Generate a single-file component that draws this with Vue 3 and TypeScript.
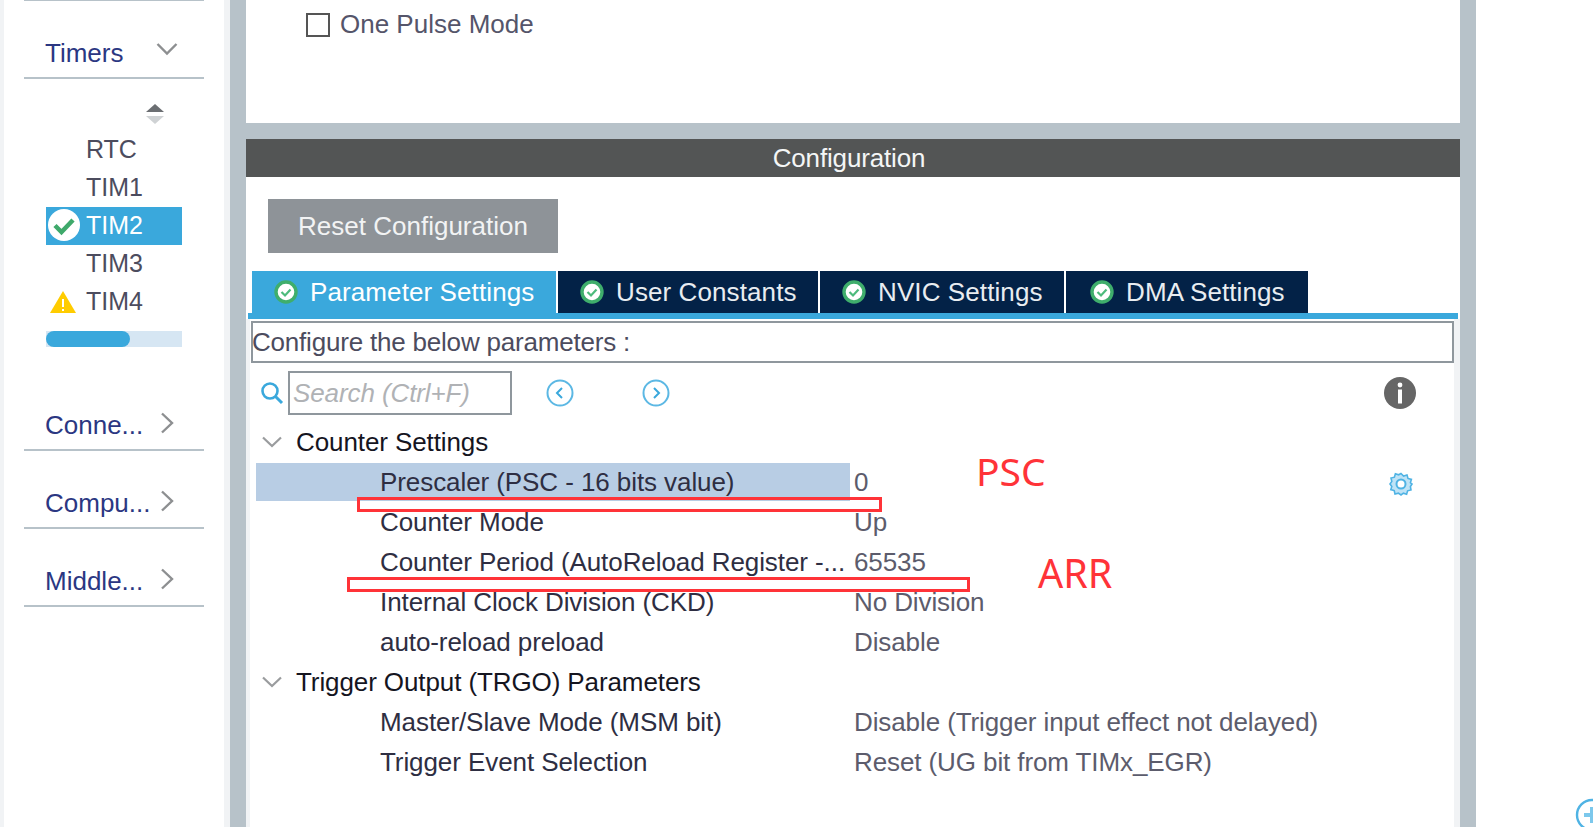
<template>
  <div class="page">
    <div class="edge"></div>

    <aside class="sidebar">
      <div class="top-rule"></div>
      <div class="category">
        <span class="category-name">Timers</span>
        <svg class="chev" width="22" height="14" viewBox="0 0 22 14"><path d="M1.5 2 L11 11.5 L20.5 2" /></svg>
      </div>
      <div class="sort">
        <svg width="20" height="22" viewBox="0 0 20 22">
          <path d="M10 1 L19 9 H1 Z" fill="#6b6e72" />
          <path d="M1 13 H19 L10 21 Z" fill="#cfd2d4" />
        </svg>
      </div>
      <ul class="peripherals">
        <li v-for="item in peripherals" :key="item.name" :class="{ active: item.state === 'ok' }">
          <svg v-if="item.state === 'ok'" class="state" width="34" height="34" viewBox="0 0 34 34">
            <circle cx="17" cy="17" r="16" fill="#fff" />
            <path d="M8 17.5 L14.5 24 L26 12" fill="none" stroke="#3fa96b" stroke-width="4.5" />
          </svg>
          <svg v-if="item.state === 'warn'" class="state" width="28" height="24" viewBox="0 0 28 24">
            <path d="M14 1 L27 23 H1 Z" fill="#fc0" />
            <path d="M14 9 V17 M14 19 V21" stroke="#fff" stroke-width="2" />
          </svg>
          <span>{{ item.name }}</span>
        </li>
      </ul>
      <div class="scrollbar"><div class="thumb"></div></div>
      <div class="categories">
        <div v-for="name in categories" :key="name" class="category">
          <span class="category-name">{{ name }}</span>
          <svg class="chev" width="14" height="22" viewBox="0 0 14 22"><path d="M2 1.5 L12 11 L2 20.5" /></svg>
        </div>
      </div>
    </aside>

    <div class="gutter"></div>
    <div class="bar"></div>

    <main class="main">
      <section class="mode-panel">
        <label class="pulse">
          <span class="checkbox"></span>
          <span>One Pulse Mode</span>
        </label>
      </section>
      <div class="band"></div>

      <section class="config">
        <header class="config-title">Configuration</header>
        <button type="button" class="reset">Reset Configuration</button>

        <nav class="tabs">
          <div v-for="(tab, i) in tabs" :key="tab.label" class="tab" :class="{ current: i === 0 }" :style="{ width: tab.width + 'px' }">
            <svg width="24" height="24" viewBox="0 0 24 24">
              <circle cx="12" cy="12" r="10" fill="#fff" stroke="#3fae6c" stroke-width="3.4" />
              <path d="M7.5 12 L11 15.5 L16.5 9.5" fill="none" stroke="#4dbb7c" stroke-width="2.2" />
            </svg>
            <span>{{ tab.label }}</span>
          </div>
        </nav>
        <div class="tab-line"></div>

        <div class="params">
          <div class="hint">Configure the below parameters :</div>

          <div class="search-row">
            <svg class="lens" width="24" height="24" viewBox="0 0 24 24">
              <circle cx="10" cy="10" r="7.5" fill="none" stroke="#3aa8dc" stroke-width="2.6" />
              <path d="M15.5 15.5 L22 22" stroke="#3aa8dc" stroke-width="3" />
            </svg>
            <div class="search">Search (Ctrl+F)</div>
            <svg class="nav nav-prev" width="28" height="28" viewBox="0 0 28 28">
              <circle cx="14" cy="14" r="12.5" fill="none" stroke="#5cb8e4" stroke-width="2" />
              <path d="M16 9 L11 14 L16 19" fill="none" stroke="#3aa8dc" stroke-width="2" />
            </svg>
            <svg class="nav nav-next" width="28" height="28" viewBox="0 0 28 28">
              <circle cx="14" cy="14" r="12.5" fill="none" stroke="#5cb8e4" stroke-width="2" />
              <path d="M12 9 L17 14 L12 19" fill="none" stroke="#3aa8dc" stroke-width="2" />
            </svg>
            <svg class="info" width="32" height="32" viewBox="0 0 32 32">
              <circle cx="16" cy="16" r="16" fill="#666" />
              <circle cx="16" cy="8" r="2.4" fill="#fff" />
              <rect x="14" y="12.5" width="4" height="14" fill="#fff" />
            </svg>
          </div>

          <div class="tree">
            <template v-for="group in groups" :key="group.title">
              <div class="group">
                <svg width="20" height="12" viewBox="0 0 20 12"><path d="M1 1.5 L10 10 L19 1.5" /></svg>
                <span>{{ group.title }}</span>
              </div>
              <div v-for="row in group.rows" :key="row.label" class="row">
                <div class="label" :class="{ selected: row.selected }">{{ row.label }}</div>
                <div class="value">{{ row.value }}</div>
                <svg v-if="row.selected" class="gear" width="24" height="24" viewBox="0 0 24 24">
                  <path
                    d="M12 1.5 L14.6 4 L18 3 L19 6.4 L22.4 7.4 L21.4 10.8 L23 12 L21.4 14.6 L22 18 L18.6 18.8 L17.6 22.2 L14.4 21.2 L12 23 L9.4 21.2 L6 22 L5.2 18.6 L1.8 17.6 L2.8 14.4 L1 12 L2.8 9.4 L2 6 L5.4 5.2 L6.4 1.8 L9.6 2.8 Z"
                    fill="#bfe3f6" stroke="#4fb3e4" stroke-width="1.6"
                  />
                  <circle cx="12" cy="12" r="4.5" fill="#fff" stroke="#4fb3e4" stroke-width="2" />
                </svg>
              </div>
            </template>
          </div>
        </div>
      </section>
    </main>

    <div class="bar"></div>
    <div class="rest"></div>

    <!-- annotations drawn on top of the screenshot -->
    <div class="mark mark-psc"></div>
    <div class="mark mark-arr"></div>
    <span class="note note-psc">PSC</span>
    <span class="note note-arr">ARR</span>

    <svg class="zoom-plus" width="34" height="34" viewBox="0 0 34 34">
      <circle cx="17" cy="17" r="15" fill="#fff" stroke="#4fb3e4" stroke-width="2.4" />
      <path d="M9 17 H25 M17 9 V25" stroke="#7cc8ec" stroke-width="4" />
    </svg>
  </div>
</template>

<script setup lang="ts">
interface Peripheral {
  name: string
  state?: 'ok' | 'warn'
}

interface Row {
  label: string
  value: string
  selected?: boolean
}

const peripherals: Peripheral[] = [
  { name: 'RTC' },
  { name: 'TIM1' },
  { name: 'TIM2', state: 'ok' },
  { name: 'TIM3' },
  { name: 'TIM4', state: 'warn' },
]

const categories = ['Conne...', 'Compu...', 'Middle...']

const tabs = [
  { label: 'Parameter Settings', width: 304 },
  { label: 'User Constants', width: 260 },
  { label: 'NVIC Settings', width: 244 },
  { label: 'DMA Settings', width: 242 },
]

const groups: { title: string; rows: Row[] }[] = [
  {
    title: 'Counter Settings',
    rows: [
      { label: 'Prescaler (PSC - 16 bits value)', value: '0', selected: true },
      { label: 'Counter Mode', value: 'Up' },
      { label: 'Counter Period (AutoReload Register -...', value: '65535' },
      { label: 'Internal Clock Division (CKD)', value: 'No Division' },
      { label: 'auto-reload preload', value: 'Disable' },
    ],
  },
  {
    title: 'Trigger Output (TRGO) Parameters',
    rows: [
      { label: 'Master/Slave Mode (MSM bit)', value: 'Disable (Trigger input effect not delayed)' },
      { label: 'Trigger Event Selection', value: 'Reset (UG bit from TIMx_EGR)' },
    ],
  },
]
</script>

<style>
html,
body {
  margin: 0;
  background: #fff;
}
</style>

<style scoped>
.page {
  position: relative;
  display: flex;
  width: 1593px;
  height: 827px;
  overflow: hidden;
  background: #fff;
  font-family: 'Liberation Sans', Arial, sans-serif;
  font-size: 26px;
  color: #3c3c4c;
}

.edge {
  flex: 0 0 4px;
  background: #f1f3f5;
}

.sidebar {
  flex: 0 0 220px;
  display: flex;
  flex-direction: column;
}

.gutter {
  flex: 0 0 6px;
  background: #f1f3f5;
}

.bar {
  flex: 0 0 16px;
  background: #b7c2c9;
}

.rest {
  flex: 1;
}

.top-rule {
  height: 1px;
  margin: 0 20px;
  background: #b7c2c9;
}

.category {
  display: flex;
  justify-content: space-between;
  height: 78px;
  box-sizing: border-box;
  margin: 0 20px;
  padding: 37px 26px 0 21px;
  border-bottom: 2px solid #b7c2c9;
}

.category-name {
  line-height: 30px;
  color: #2b3782;
  white-space: nowrap;
}

.chev {
  margin-top: 4px;
  fill: none;
  stroke: #8d8f91;
  stroke-width: 2.4;
}

.sort {
  display: flex;
  justify-content: flex-end;
  height: 52px;
  padding: 24px 59px 0 0;
  box-sizing: border-box;
}

.peripherals {
  list-style: none;
  margin: 0 0 10px 42px;
  padding: 0;
  width: 136px;
}

.peripherals li {
  position: relative;
  height: 38px;
  line-height: 36px;
  padding-left: 40px;
  font-size: 25px;
  color: #4c4c5e;
}

.peripherals li.active {
  background: #3aa8dc;
  color: #fff;
}

.state {
  position: absolute;
  left: 1px;
  top: 1px;
}

.peripherals li:last-child .state {
  left: 3px;
  top: 7px;
}

.scrollbar {
  width: 136px;
  height: 16px;
  margin-left: 42px;
  background: #d6e6f3;
}

.thumb {
  width: 84px;
  height: 16px;
  border-radius: 8px;
  background: #3aa8dc;
}

.categories {
  margin-top: 26px;
}

.categories .chev {
  margin: 2px 0 0;
  position: relative;
  left: -4px;
}

.main {
  flex: 0 0 1214px;
  display: flex;
  flex-direction: column;
}

.mode-panel {
  flex: 0 0 123px;
  background: #fff;
  padding: 12px 0 0 60px;
  box-sizing: border-box;
}

.band {
  flex: 0 0 16px;
  background: #b7c2c9;
}

.pulse {
  display: flex;
  align-items: center;
  gap: 10px;
  height: 24px;
  color: #55556a;
}

.checkbox {
  width: 24px;
  height: 24px;
  margin-top: 2px;
  box-sizing: border-box;
  border: 2px solid #555;
}

.config {
  flex: 1;
  display: flex;
  flex-direction: column;
  min-height: 0;
}

.config-title {
  height: 38px;
  line-height: 38px;
  padding-right: 8px;
  text-align: center;
  background: #535555;
  color: #f4f6f6;
  letter-spacing: -0.15px;
}

.reset {
  align-self: flex-start;
  width: 290px;
  height: 54px;
  margin: 22px 0 18px 22px;
  border: 0;
  padding: 0;
  background: #8e9398;
  color: #f2f3f4;
  font: inherit;
}

.tabs {
  display: flex;
  gap: 2px;
  margin-left: 6px;
}

.tab {
  display: flex;
  align-items: center;
  height: 42px;
  padding-left: 22px;
  box-sizing: border-box;
  background: #032247;
  color: #e9edf1;
  letter-spacing: 0.1px;
  white-space: nowrap;
}

.tab:last-child {
  padding-left: 24px;
}

.tab.current {
  background: #3aa8dc;
  color: #fff;
}

.tab svg {
  margin-right: 12px;
}

.tab-line {
  height: 6px;
  margin: 0 2px;
  background: #3aa8dc;
}

.params {
  flex: 1;
  border-left: 4px solid #f1f3f5;
  border-right: 6px solid #f1f3f5;
  background: #fff;
}

.hint {
  height: 42px;
  line-height: 38px;
  margin: 2px 0 0 1px;
  box-sizing: border-box;
  border: 2px solid #8f979d;
  color: #4c4c5e;
  letter-spacing: -0.2px;
  text-indent: -1px;
}

.search-row {
  display: flex;
  align-items: center;
  height: 44px;
  margin-top: 8px;
  padding-left: 10px;
}

.lens {
  flex: none;
}

.search {
  width: 224px;
  height: 44px;
  box-sizing: border-box;
  margin-left: 4px;
  padding-left: 3px;
  border: 2px solid #8f979d;
  line-height: 40px;
  font-style: italic;
  color: #b0b2b5;
  letter-spacing: -0.1px;
}

.nav {
  flex: none;
}

.nav-prev {
  margin-left: 34px;
}

.nav-next {
  margin-left: 68px;
}

.info {
  margin-left: auto;
  margin-right: 38px;
}

.tree {
  margin-top: 7px;
}

.group {
  display: flex;
  align-items: center;
  height: 40px;
  padding-left: 12px;
  color: #15151f;
  letter-spacing: -0.1px;
}

.group svg {
  margin-right: 14px;
  fill: none;
  stroke: #9a9c9e;
  stroke-width: 2.2;
}

.row {
  display: flex;
  height: 40px;
  margin-left: 6px;
  align-items: center;
}

.label {
  width: 594px;
  height: 38px;
  line-height: 38px;
  box-sizing: border-box;
  padding-left: 124px;
  color: #2e2e42;
  white-space: nowrap;
  letter-spacing: -0.08px;
}

.label.selected {
  background: #b8cde4;
}

.value {
  padding-left: 4px;
  color: #5c5c6c;
  white-space: nowrap;
  letter-spacing: -0.1px;
}

.gear {
  margin: 4px 41px 0 auto;
}

.mark {
  position: absolute;
  box-sizing: border-box;
  border: 3px solid #ff3338;
}

.mark-psc {
  left: 357px;
  top: 497px;
  width: 525px;
  height: 15px;
}

.mark-arr {
  left: 347px;
  top: 577px;
  width: 623px;
  height: 15px;
}

.note {
  position: absolute;
  font-family: 'Noto Sans', sans-serif;
  color: #ff3338;
  line-height: 1;
}

.note-psc {
  left: 976px;
  top: 451px;
  font-size: 39px;
}

.note-arr {
  left: 1038px;
  top: 554px;
  font-size: 39.5px;
}

.zoom-plus {
  position: absolute;
  left: 1575px;
  top: 798px;
}
</style>
